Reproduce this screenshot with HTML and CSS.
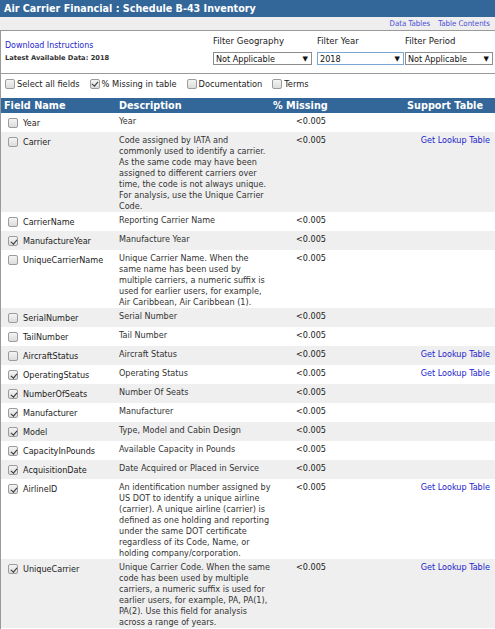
FILE: index.html
```html
<!DOCTYPE html>
<html>
<head>
<meta charset="utf-8">
<title>Air Carrier Financial : Schedule B-43 Inventory</title>
<link rel="stylesheet" href="styles.css">
</head>
<body>
<div class="titlebar">Air Carrier Financial : Schedule B-43 Inventory</div>
<div class="subbar"><a href="#">Data Tables</a><a href="#">Table Contents</a></div>
<div class="page">
  <div class="filters">
    <div class="info">
      <a href="#" class="dl">Download Instructions</a>
      <div class="latest">Latest Available Data: 2018</div>
    </div>
    <div class="filter geo">
      <div class="flabel">Filter Geography</div>
      <div class="select"><span>Not Applicable</span><span class="arrow">▼</span></div>
    </div>
    <div class="filter year">
      <div class="flabel">Filter Year</div>
      <div class="select focus"><span>2018</span><span class="arrow">▼</span></div>
    </div>
    <div class="filter period">
      <div class="flabel">Filter Period</div>
      <div class="select"><span>Not Applicable</span><span class="arrow">▼</span></div>
    </div>
  </div>
  <div class="options">
    <label class="opt"><span class="cb"></span>Select all fields</label>
    <label class="opt"><span class="cb on"></span>% Missing in table</label>
    <label class="opt"><span class="cb"></span>Documentation</label>
    <label class="opt"><span class="cb"></span>Terms</label>
  </div>
  <table class="fields">
    <colgroup><col class="c1"><col class="c2"><col class="c3"><col class="c4"></colgroup>
    <thead>
      <tr><th class="h1">Field Name</th><th class="h2">Description</th><th class="h3">% Missing</th><th class="h4">Support Table</th></tr>
    </thead>
    <tbody>
      <tr><td class="fn"><div class="fw"><span class="cb"></span>Year</div></td><td class="ds">Year</td><td class="pm">&lt;0.005</td><td class="st"></td></tr>
      <tr class="alt"><td class="fn"><div class="fw"><span class="cb"></span>Carrier</div></td><td class="ds">Code assigned by IATA and commonly used to identify a carrier. As the same code may have been assigned to different carriers over time, the code is not always unique. For analysis, use the Unique Carrier Code.</td><td class="pm">&lt;0.005</td><td class="st"><a href="#">Get Lookup Table</a></td></tr>
      <tr><td class="fn"><div class="fw"><span class="cb"></span>CarrierName</div></td><td class="ds">Reporting Carrier Name</td><td class="pm">&lt;0.005</td><td class="st"></td></tr>
      <tr class="alt"><td class="fn"><div class="fw"><span class="cb on"></span>ManufactureYear</div></td><td class="ds">Manufacture Year</td><td class="pm">&lt;0.005</td><td class="st"></td></tr>
      <tr><td class="fn"><div class="fw"><span class="cb"></span>UniqueCarrierName</div></td><td class="ds">Unique Carrier Name. When the same name has been used by multiple carriers, a numeric suffix is used for earlier users, for example, Air Caribbean, Air Caribbean (1).</td><td class="pm">&lt;0.005</td><td class="st"></td></tr>
      <tr class="alt"><td class="fn"><div class="fw"><span class="cb"></span>SerialNumber</div></td><td class="ds">Serial Number</td><td class="pm">&lt;0.005</td><td class="st"></td></tr>
      <tr><td class="fn"><div class="fw"><span class="cb"></span>TailNumber</div></td><td class="ds">Tail Number</td><td class="pm">&lt;0.005</td><td class="st"></td></tr>
      <tr class="alt"><td class="fn"><div class="fw"><span class="cb"></span>AircraftStatus</div></td><td class="ds">Aircraft Status</td><td class="pm">&lt;0.005</td><td class="st"><a href="#">Get Lookup Table</a></td></tr>
      <tr><td class="fn"><div class="fw"><span class="cb on"></span>OperatingStatus</div></td><td class="ds">Operating Status</td><td class="pm">&lt;0.005</td><td class="st"><a href="#">Get Lookup Table</a></td></tr>
      <tr class="alt"><td class="fn"><div class="fw"><span class="cb on"></span>NumberOfSeats</div></td><td class="ds">Number Of Seats</td><td class="pm">&lt;0.005</td><td class="st"></td></tr>
      <tr><td class="fn"><div class="fw"><span class="cb on"></span>Manufacturer</div></td><td class="ds">Manufacturer</td><td class="pm">&lt;0.005</td><td class="st"></td></tr>
      <tr class="alt"><td class="fn"><div class="fw"><span class="cb on"></span>Model</div></td><td class="ds">Type, Model and Cabin Design</td><td class="pm">&lt;0.005</td><td class="st"></td></tr>
      <tr><td class="fn"><div class="fw"><span class="cb on"></span>CapacityInPounds</div></td><td class="ds">Available Capacity in Pounds</td><td class="pm">&lt;0.005</td><td class="st"></td></tr>
      <tr class="alt"><td class="fn"><div class="fw"><span class="cb on"></span>AcquisitionDate</div></td><td class="ds">Date Acquired or Placed in Service</td><td class="pm">&lt;0.005</td><td class="st"></td></tr>
      <tr><td class="fn"><div class="fw"><span class="cb on"></span>AirlineID</div></td><td class="ds">An identification number assigned by US DOT to identify a unique airline (carrier). A unique airline (carrier) is defined as one holding and reporting under the same DOT certificate regardless of its Code, Name, or holding company/corporation.</td><td class="pm">&lt;0.005</td><td class="st"><a href="#">Get Lookup Table</a></td></tr>
      <tr class="alt"><td class="fn"><div class="fw"><span class="cb on"></span>UniqueCarrier</div></td><td class="ds">Unique Carrier Code. When the same code has been used by multiple carriers, a numeric suffix is used for earlier users, for example, PA, PA(1), PA(2). Use this field for analysis across a range of years.</td><td class="pm">&lt;0.005</td><td class="st"><a href="#">Get Lookup Table</a></td></tr>
    </tbody>
  </table>
  <div class="endline"></div>
</div>
</body>
</html>
```
FILE: styles.css
```css
html, body {
  margin: 0;
  padding: 0;
  background: #ffffff;
}
body {
  font-family: "DejaVu Sans Condensed", "DejaVu Sans", sans-serif;
  font-size: 9px;
  color: #222222;
}
a {
  color: #1c1ccc;
  text-decoration: none;
}
.titlebar {
  height: 17px;
  line-height: 17px;
  background: #336699;
  color: #ffffff;
  font-family: "DejaVu Sans", sans-serif;
  font-weight: bold;
  font-size: 9.6px;
  padding-left: 4px;
  white-space: nowrap;
}
.subbar {
  height: 13px;
  background: #eeeeee;
  display: flex;
  justify-content: flex-end;
  align-items: center;
  gap: 8px;
  padding-right: 5px;
  font-size: 7.8px;
}
.subbar a {
  color: #4a4ad6;
}
.page {
  border-left: 1px solid #9a9a9a;
}
.filters {
  border-top: 1px solid #9a9a9a;
  border-bottom: 1px solid #9a9a9a;
  height: 42px;
  display: flex;
}
.info {
  width: 208px;
  padding: 9px 0 0 4px;
}
.dl {
  display: block;
  font-size: 8.8px;
  line-height: 11px;
}
.latest {
  margin-top: 3px;
  font-family: "DejaVu Sans", sans-serif;
  font-weight: bold;
  font-size: 6.7px;
  color: #333333;
}
.filter {
  padding-top: 4px;
}
.flabel {
  font-size: 9.5px;
  line-height: 11px;
  color: #222222;
  margin-bottom: 6px;
}
.geo { width: 104px; }
.year { width: 88px; }
.period { flex: 1; }
.select {
  box-sizing: border-box;
  height: 13px;
  border: 1px solid #8c8c8c;
  background: #ffffff;
  display: flex;
  justify-content: space-between;
  align-items: center;
  padding: 0 3px 0 2px;
  font-size: 9px;
  color: #111111;
}
.geo .select { width: 99px; }
.year .select { width: 87px; border-color: #7aa4d4; }
.period .select { width: 88px; }
.arrow {
  font-family: "DejaVu Sans", sans-serif;
  font-size: 7px;
  color: #111111;
}
.options {
  display: flex;
  align-items: center;
  height: 19px;
  padding-left: 4px;
  margin-bottom: 5px;
}
.opt {
  display: flex;
  align-items: center;
  font-size: 9.2px;
  margin-right: 10px;
  color: #222222;
}
.opt .cb {
  margin-right: 2px;
}
.cb {
  box-sizing: border-box;
  display: inline-block;
  flex: none;
  width: 10px;
  height: 10px;
  border: 1px solid #9c9c9c;
  border-radius: 2px;
  background: linear-gradient(#f4f4f4, #dcdcdc);
  position: relative;
}
.cb.on::after {
  content: "";
  position: absolute;
  left: 2.5px;
  top: 0.5px;
  width: 2.5px;
  height: 5px;
  border-right: 1.5px solid #333333;
  border-bottom: 1.5px solid #333333;
  transform: rotate(40deg);
}
table.fields {
  width: 494px;
  border-collapse: collapse;
  table-layout: fixed;
}
col.c1 { width: 114px; }
col.c2 { width: 158px; }
col.c3 { width: 55px; }
col.c4 { width: 167px; }
thead tr {
  background: #336699;
  height: 15px;
}
th {
  color: #ffffff;
  font-family: "DejaVu Sans", sans-serif;
  font-weight: bold;
  font-size: 9.7px;
  padding: 0;
  line-height: 15px;
  white-space: nowrap;
}
th.h1 { text-align: left; padding-left: 3px; }
th.h2 { text-align: left; padding-left: 4px; }
th.h3 { text-align: right; padding-right: 1px; }
th.h4 { text-align: right; padding-right: 12px; }
td {
  vertical-align: top;
  line-height: 11px;
  padding: 3px 2px 0 2px;
}
tr.alt td {
  background: #efefef;
}
td.fn {
  padding: 5px 0 4px 7px;
}
.fw {
  display: flex;
  align-items: center;
  gap: 5px;
  height: 10px;
  line-height: 11px;
  white-space: nowrap;
}
td.ds {
  padding-left: 4px;
  padding-right: 0;
  color: #333333;
}
td.pm {
  text-align: right;
  padding-right: 2px;
  color: #222222;
}
td.st {
  text-align: right;
  padding-right: 5px;
}
td.st a {
  color: #1c1ccc;
}
.endline {
  height: 2px;
  background: #7a7573;
  margin-top: 1px;
  margin-left: -1px;
}
```
